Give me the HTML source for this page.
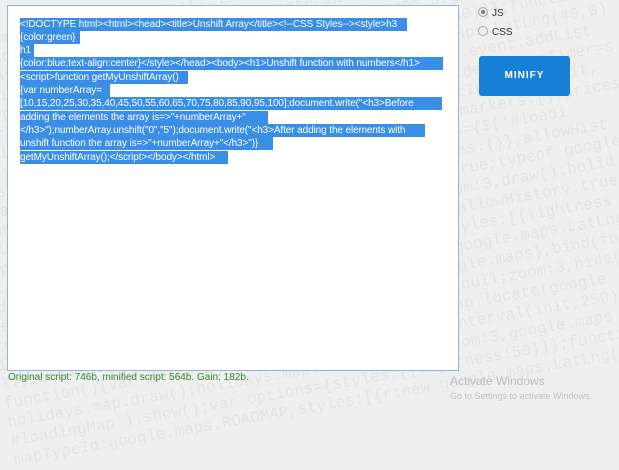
<!DOCTYPE html>
<html><head><style>
body{margin:0;width:619px;height:415px;background:#efefef;position:relative;overflow:hidden;font-family:"Liberation Sans",sans-serif}
.bg{position:absolute;left:-60px;top:40px;width:900px;font-family:"Liberation Mono",monospace;font-size:16px;line-height:19px;color:#e3e3e3;transform:rotate(-10deg);transform-origin:0 0;white-space:nowrap}
.box{position:absolute;left:7px;top:5px;width:450px;height:364px;background:#fff;border:1px solid #8fb2e8}
.l{position:absolute;left:20px;height:13px;background:#3a8ee6;color:#fff;font-size:10px;line-height:13px;white-space:nowrap;overflow:hidden;letter-spacing:-0.1px}
.r{position:absolute;left:478px;font-size:10px;color:#333}
.r i{display:inline-block;width:8px;height:8px;border-radius:50%;border:1px solid #aaa;background:#eee;vertical-align:-1px;margin-right:4px}
.btn{position:absolute;left:479px;top:56px;width:91px;height:40px;background:#1680d6;border-radius:3px;color:#fff;font-size:10px;font-weight:bold;letter-spacing:1px;text-align:center;line-height:40px}
.g{position:absolute;left:8px;top:372px;font-size:10px;color:#2e8a2e}
.aw{position:absolute;left:450px;top:374px;font-size:12px;color:#bdbdbd}
.aw2{position:absolute;left:450px;top:391px;font-size:9px;color:#c2c2c2}
</style></head><body>
<div class="bg">ll,zoomTimer:null,markers:[],locate();holidays.map.locate(google='undefined'<br>function(){var init=function(){var interval=setInterval(init,250)};holid<br>holidays.map.draw();holidays.map.LatLng(40,0),zoom:3,google.maps.LatLng<br>#loadingMap').show();var options={styles:[{lightness:50}]};function(){<br>mapTypeId:google.maps.ROADMAP,styles:[{r:new google.maps.LatLng(40,0)<br>clearInterval(interval)}},bind(function(){google.maps.event.addList<br>addListener(map,'idle',function(){$('#loadingMap').hide();zoomTimer=s<br>story:true,init:function(){holidays.map.zoomTimer=setInterval(init,<br>maps:'undefined'){clearInterval();holidays.map.null;markers:[],prices<br>ap.autocomplete();clearInterval();show();var options={$('#loadi<br>:function(){$('#loadingMap').hide();markers:[],prices:{}},allowHist<br>holidays.map.addListener(map,'idle');allowHistory:true;typeof google<br>maps.event.addListener(google.maps.LatLng(40,0),zoom:3,draw();holid<br>ll,markers:[],locate();holidays.map.draw();bind();allowHistory:true<br>ndefined'){clearInterval(interval);var options={styles:[{lightness<br>lete();clearInterval();show();var options={r:new google.maps.LatLng<br>rdingMap'),show();reType:'all',styles:[{r:new google.maps},bind(fun<br>Id.ROADMAP,styles:[{lightness:50}]};holidays.map.null;zoom:3,hide()<br>ll,zoomTimer:null,markers:[],locate();holidays.map.locate(google<br>function(){var init=function(){var interval=setInterval(init,250)}<br>holidays.map.draw();holidays.map.LatLng(40,0),zoom:3,google.maps<br>#loadingMap').show();var options={styles:[{lightness:50}]};function<br>mapTypeId:google.maps.ROADMAP,styles:[{r:new google.maps.LatLng(40</div>
<div class="box"></div>
<div class="l" style="top:18px;width:387px">&lt;!DOCTYPE html&gt;&lt;html&gt;&lt;head&gt;&lt;title&gt;Unshift Array&lt;/title&gt;&lt;!--CSS Styles--&gt;&lt;style&gt;h3</div>
<div class="l" style="top:31px;width:60px">{color:green}</div>
<div class="l" style="top:44px;width:14px">h1</div>
<div class="l" style="top:57px;width:423px">{color:blue;text-align:center}&lt;/style&gt;&lt;/head&gt;&lt;body&gt;&lt;h1&gt;Unshift function with numbers&lt;/h1&gt;</div>
<div class="l" style="top:71px;width:168px">&lt;script&gt;function getMyUnshiftArray()</div>
<div class="l" style="top:84px;width:90px">{var numberArray=</div>
<div class="l" style="top:97px;width:422px">[10,15,20,25,30,35,40,45,50,55,60,65,70,75,80,85,90,95,100];document.write("&lt;h3&gt;Before</div>
<div class="l" style="top:111px;width:248px">adding the elements the array is=&gt;"+numberArray+"</div>
<div class="l" style="top:124px;width:405px">&lt;/h3&gt;");numberArray.unshift("0","5");document.write("&lt;h3&gt;After adding the elements with</div>
<div class="l" style="top:137px;width:253px">unshift function the array is=&gt;"+numberArray+"&lt;/h3&gt;")}</div>
<div class="l" style="top:151px;width:208px">getMyUnshiftArray();&lt;/script&gt;&lt;/body&gt;&lt;/html&gt;</div>
<div class="r" style="top:7px"><i style="background:#777;box-shadow:inset 0 0 0 2px #eee"></i>JS</div>
<div class="r" style="top:26px"><i></i>CSS</div>
<div class="btn">MINIFY</div>
<div class="g">Original script: 746b, minified script: 564b. Gain: 182b.</div>
<div class="aw">Activate Windows</div>
<div class="aw2">Go to Settings to activate Windows.</div>
</body></html>
